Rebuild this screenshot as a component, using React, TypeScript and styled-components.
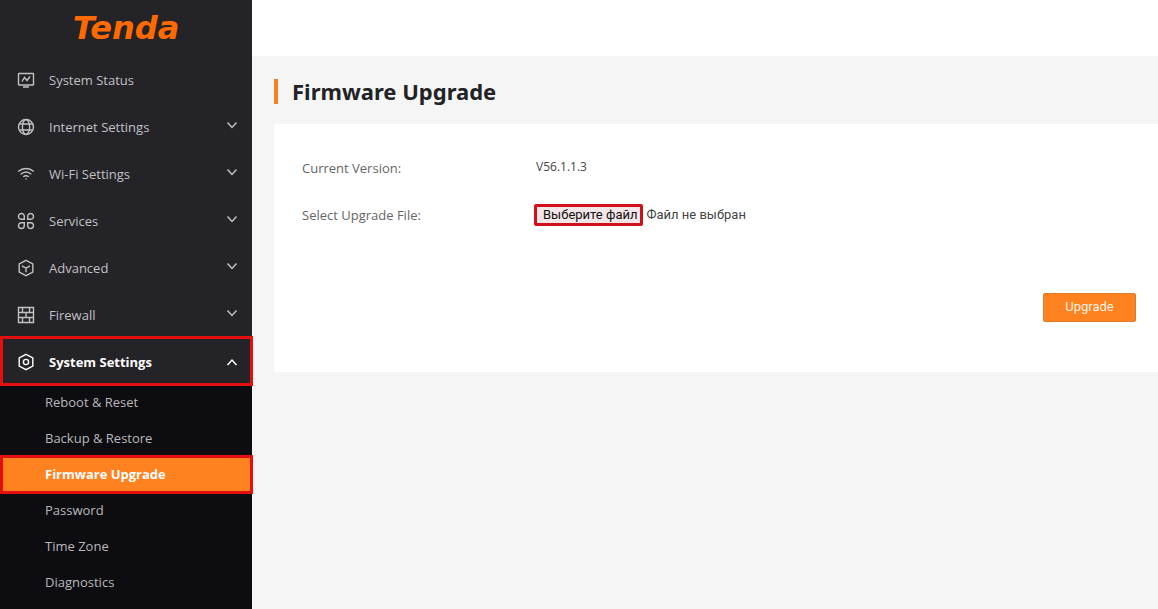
import React, { useRef, useState } from "react";
import styled, { createGlobalStyle, css } from "styled-components";

const GlobalStyle = createGlobalStyle`
  *, *::before, *::after { box-sizing: border-box; }
  body {
    margin: 0;
    background: #f5f5f5;
    font-family: "Open Sans", "Noto Sans", sans-serif;
    font-size: 13px;
  }
`;

const Shell = styled.div`
  display: flex;
  height: 100vh;
  overflow: hidden;
`;

const Sidebar = styled.aside`
  display: flex;
  flex-direction: column;
  flex: 0 0 252px;
  background: #242328;
`;

const Brand = styled.a`
  display: flex;
  justify-content: center;
  align-items: center;
  flex: 0 0 56px;
  color: #ff6a00;
  font: italic bold 32px/36px "DejaVu Sans", sans-serif;
  text-decoration: none;
`;

const Nav = styled.nav`
  display: flex;
  flex-direction: column;
  flex: 1;
`;

const highlight = css`
  position: relative;
  z-index: 1;
  &::after {
    content: "";
    position: absolute;
    inset: -2px -1px -1px 0;
    border: 3px solid #e60f0f;
    pointer-events: none;
  }
`;

const MenuItem = styled.button<{ $open?: boolean }>`
  display: flex;
  align-items: center;
  gap: 14px;
  flex: 0 0 47px;
  padding: 0 14px 0 17px;
  border: 0;
  background: none;
  color: ${(p) => (p.$open ? "#fff" : "#c1c1c4")};
  font: ${(p) => (p.$open ? 700 : 400)} 13px/20px "Open Sans", sans-serif;
  text-align: left;
  cursor: pointer;
  ${(p) => p.$open && highlight}
`;

const MenuLabel = styled.span`
  flex: 1;
`;

const Icon = styled.svg`
  width: 18px;
  height: 18px;
  fill: none;
  stroke: currentColor;
  stroke-width: 1.4;
`;

const Chevron = styled.svg<{ $up?: boolean }>`
  width: 12px;
  height: 12px;
  margin-bottom: ${(p) => (p.$up ? 0 : 4)}px;
  fill: none;
  stroke: currentColor;
  stroke-width: 1.5;
`;

const SubMenu = styled.div`
  display: flex;
  flex-direction: column;
  flex: 1;
  background: #0d0c10;
`;

const SubItem = styled.a<{ $active?: boolean }>`
  flex: 0 0 36px;
  padding-left: 45px;
  background: ${(p) => (p.$active ? "#ff8220" : "transparent")};
  color: ${(p) => (p.$active ? "#fff" : "#b9b9bc")};
  font-weight: ${(p) => (p.$active ? 700 : 400)};
  line-height: 34px;
  text-decoration: none;
  ${(p) => p.$active && highlight}
`;

const Main = styled.main`
  flex: 1;
  min-width: 0;
`;

const TopBar = styled.header`
  height: 56px;
  background: #fff;
`;

const Content = styled.section`
  padding: 23px 0 0 22px;
`;

const Title = styled.h1`
  margin: 0 0 20px;
  padding-left: 14px;
  border-left: 4px solid #f58220;
  color: #222326;
  font: 700 22px/25px "Noto Sans", sans-serif;
`;

const Card = styled.form`
  display: flex;
  flex-direction: column;
  min-height: 248px;
  padding: 20px 22px 50px 28px;
  background: #fff;
`;

const Field = styled.div`
  display: flex;
  align-items: center;
  height: 47px;
  color: #666;
`;

const FieldName = styled.label`
  flex: 0 0 232px;
`;

const Version = styled.output`
  padding: 0 2px 2px;
  color: #444;
  font-size: 12px;
`;

const HiddenFile = styled.input`
  position: absolute;
  width: 1px;
  height: 1px;
  opacity: 0;
  pointer-events: none;
`;

const FileButton = styled.button`
  height: 22px;
  padding: 0 3px 0 6px;
  border: 3px solid #d2101a;
  border-radius: 2px;
  background: #f3e6e8;
  color: #111;
  font: 13px/16px Roboto, Arial, sans-serif;
  cursor: pointer;
`;

const FileName = styled.span`
  margin-left: 3px;
  color: #444;
  font: 13px/16px Roboto, Arial, sans-serif;
`;

const Actions = styled.div`
  display: flex;
  justify-content: flex-end;
  margin-top: auto;
`;

const Upgrade = styled.button`
  width: 93px;
  height: 29px;
  padding: 0 0 2px;
  border: 1px solid #e07a28;
  border-radius: 2px;
  background: #ff8220;
  color: #fff3e4;
  font: 13px/20px Roboto, Arial, sans-serif;
  cursor: pointer;
`;

const menu: { label: string; icon: React.ReactNode; open?: boolean; leaf?: boolean }[] = [
  {
    label: "System Status",
    leaf: true,
    icon: (
      <>
        <rect x="1.5" y="2.5" width="15" height="11.5" rx="0.5" />
        <path d="M5 10.5 7.5 6.5 10 9.5 13 5.5M6 16h6" />
      </>
    ),
  },
  {
    label: "Internet Settings",
    icon: (
      <>
        <circle cx="9" cy="9" r="7.5" />
        <ellipse cx="9" cy="9" rx="3.6" ry="7.5" />
        <path d="M2.3 6h13.4M2.3 12h13.4" />
      </>
    ),
  },
  {
    label: "Wi-Fi Settings",
    icon: (
      <>
        <path d="M1.2 6.6c4.6-4.1 11-4.1 15.6 0M3.7 9.3c3.2-2.8 7.4-2.8 10.6 0M6.2 11.8c1.8-1.4 3.8-1.4 5.6 0" />
        <circle cx="9" cy="14" r="0.8" fill="currentColor" stroke="none" />
      </>
    ),
  },
  {
    label: "Services",
    icon: (
      <>
        <path d="M7.3 7.3H4.4a2.9 2.9 0 1 1 2.9-2.9z" />
        <path d="M10.7 7.3h2.9a2.9 2.9 0 1 0-2.9-2.9z" />
        <path d="M7.3 10.7H4.4a2.9 2.9 0 1 0 2.9 2.9z" />
        <path d="M10.7 10.7h2.9a2.9 2.9 0 1 1-2.9 2.9z" />
      </>
    ),
  },
  {
    label: "Advanced",
    icon: <path d="M9 1.4 15.8 5v8L9 16.6 2.2 13V5zM5 6.8l4 2.3 4-2.3M9 9.1v4.2" />,
  },
  {
    label: "Firewall",
    icon: (
      <path d="M1.5 1.5h15v15h-15zM1.5 6.5h15M1.5 11.5h15M5.5 1.5v5M12.5 1.5v5M9 6.5v5M5.5 11.5v5M12.5 11.5v5" />
    ),
  },
  {
    label: "System Settings",
    open: true,
    icon: (
      <>
        <path d="M9 1.4 15.8 5v8L9 16.6 2.2 13V5z" />
        <circle cx="9" cy="9" r="2.6" />
      </>
    ),
  },
];

const pages = ["Reboot & Reset", "Backup & Restore", "Firmware Upgrade", "Password", "Time Zone", "Diagnostics"];

export default function App() {
  const fileInput = useRef<HTMLInputElement>(null);
  const [fileName, setFileName] = useState("Файл не выбран");

  return (
    <Shell>
      <GlobalStyle />
      <Sidebar>
        <Brand href="#home">Tenda</Brand>
        <Nav>
          {menu.map((item) => (
            <MenuItem key={item.label} type="button" $open={item.open} aria-expanded={item.leaf ? undefined : !!item.open}>
              <Icon viewBox="0 0 18 18" aria-hidden="true">{item.icon}</Icon>
              <MenuLabel>{item.label}</MenuLabel>
              {!item.leaf && (
                <Chevron viewBox="0 0 12 12" $up={item.open} aria-hidden="true">
                  <path d={item.open ? "M1.5 9 6 4l4.5 5" : "M1.5 3.5 6 8.5l4.5-5"} />
                </Chevron>
              )}
            </MenuItem>
          ))}
          <SubMenu>
            {pages.map((page) => (
              <SubItem key={page} href="#page" $active={page === "Firmware Upgrade"}>
                {page}
              </SubItem>
            ))}
          </SubMenu>
        </Nav>
      </Sidebar>
      <Main>
        <TopBar />
        <Content>
          <Title>Firmware Upgrade</Title>
          <Card onSubmit={(e) => e.preventDefault()}>
            <Field>
              <FieldName htmlFor="version">Current Version:</FieldName>
              <Version id="version">V56.1.1.3</Version>
            </Field>
            <Field>
              <FieldName htmlFor="firmware">Select Upgrade File:</FieldName>
              <HiddenFile
                ref={fileInput}
                id="firmware"
                type="file"
                tabIndex={-1}
                onChange={(e) => setFileName(e.target.files?.[0]?.name ?? "Файл не выбран")}
              />
              <FileButton type="button" onClick={() => fileInput.current?.click()}>
                Выберите файл
              </FileButton>
              <FileName>{fileName}</FileName>
            </Field>
            <Actions>
              <Upgrade type="submit">Upgrade</Upgrade>
            </Actions>
          </Card>
        </Content>
      </Main>
    </Shell>
  );
}
